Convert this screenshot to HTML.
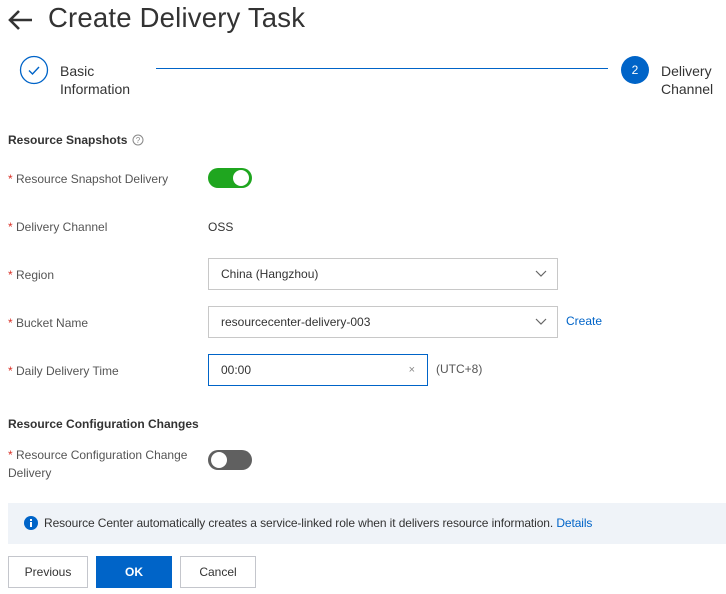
<!DOCTYPE html>
<html><head><style>
*{box-sizing:border-box;margin:0;padding:0}
body{width:726px;height:594px;background:#fff;font-family:"Liberation Sans",sans-serif;position:relative;overflow:hidden;color:#333}
.a{position:absolute;white-space:nowrap}
.lbl{font-size:12px;color:#555}
.lbl b{color:#d93026;font-weight:normal}
.box{position:absolute;border:1px solid #c8c8c8;background:#fff;font-size:12px;color:#333;padding-left:12px;line-height:30px;height:32px}
.chev{position:absolute;right:10px;top:10px}
.btn{position:absolute;top:556px;height:32px;border:1px solid #c4c6cc;background:#fff;font-size:12px;text-align:center;line-height:30px;color:#333}
</style></head><body>
<svg class="a" style="left:8px;top:9px" width="26" height="22" viewBox="0 0 26 22"><path d="M24 11H3M11 2L2 11l9 9" stroke="#333" stroke-width="2.6" fill="none"/></svg>
<div class="a" style="left:48px;top:2px;font-size:27.5px;color:#333;letter-spacing:0.2px">Create Delivery Task</div>

<svg class="a" style="left:19px;top:55px" width="30" height="30"><circle cx="15" cy="15" r="13.5" stroke="#0064c8" stroke-width="1.3" fill="#fff"/><path d="M10 15.5l3.5 3.5 6.5-7" stroke="#0064c8" stroke-width="1.4" fill="none"/></svg>
<div class="a" style="left:60px;top:62px;font-size:14px;line-height:18px;color:#333">Basic<br>Information</div>
<div class="a" style="left:156px;top:68px;width:452px;height:1px;background:#0064c8"></div>
<div class="a" style="left:621px;top:56px;width:28px;height:28px;border-radius:50%;background:#0064c8;color:#fff;font-size:12px;text-align:center;line-height:28px">2</div>
<div class="a" style="left:661px;top:62px;font-size:14px;line-height:18px;color:#333">Delivery<br>Channel</div>

<div class="a" style="left:8px;top:133px;font-size:12px;font-weight:bold;color:#333">Resource Snapshots</div>
<svg class="a" style="left:132px;top:134px" width="12" height="12"><circle cx="6" cy="6" r="5" stroke="#888" fill="none"/><text x="6" y="9" font-size="8" text-anchor="middle" fill="#888" font-family="Liberation Sans">?</text></svg>

<div class="a lbl" style="left:8px;top:172px"><b>*</b> Resource Snapshot Delivery</div>
<div class="a" style="left:208px;top:168px;width:44px;height:20px;border-radius:10px;background:#1fa61f"><div style="position:absolute;right:3px;top:2px;width:16px;height:16px;border-radius:50%;background:#fff"></div></div>

<div class="a lbl" style="left:8px;top:220px"><b>*</b> Delivery Channel</div>
<div class="a" style="left:208px;top:220px;font-size:12px;color:#333">OSS</div>

<div class="a lbl" style="left:8px;top:268px"><b>*</b> Region</div>
<div class="box" style="left:208px;top:258px;width:350px">China (Hangzhou)<svg class="chev" width="12" height="10"><path d="M1 2l5 5 5-5" stroke="#666" stroke-width="1.2" fill="none"/></svg></div>

<div class="a lbl" style="left:8px;top:316px"><b>*</b> Bucket Name</div>
<div class="box" style="left:208px;top:306px;width:350px">resourcecenter-delivery-003<svg class="chev" width="12" height="10"><path d="M1 2l5 5 5-5" stroke="#666" stroke-width="1.2" fill="none"/></svg></div>
<div class="a" style="left:566px;top:314px;font-size:12px;color:#0064c8">Create</div>

<div class="a lbl" style="left:8px;top:364px"><b>*</b> Daily Delivery Time</div>
<div class="box" style="left:208px;top:354px;width:220px;border-color:#0064c8">00:00<span style="position:absolute;right:12px;top:0;color:#888;font-size:11px">×</span></div>
<div class="a" style="left:436px;top:362px;font-size:12px;color:#555">(UTC+8)</div>

<div class="a" style="left:8px;top:417px;font-size:12px;font-weight:bold;color:#333">Resource Configuration Changes</div>
<div class="a lbl" style="left:8px;top:446px;line-height:18px"><b>*</b> Resource Configuration Change<br>Delivery</div>
<div class="a" style="left:208px;top:450px;width:44px;height:20px;border-radius:10px;background:#606060"><div style="position:absolute;left:3px;top:2px;width:16px;height:16px;border-radius:50%;background:#fff"></div></div>

<div class="a" style="left:8px;top:503px;width:718px;height:41px;background:#eff3f8"></div>
<svg class="a" style="left:24px;top:516px" width="14" height="14"><circle cx="7" cy="7" r="7" fill="#0064c8"/><rect x="6" y="6" width="2" height="5" fill="#fff"/><rect x="6" y="3" width="2" height="2" fill="#fff"/></svg>
<div class="a" style="left:44px;top:516px;font-size:12px;color:#333;letter-spacing:-0.1px">Resource Center automatically creates a service-linked role when it delivers resource information. <span style="color:#0064c8">Details</span></div>

<div class="btn" style="left:8px;width:80px">Previous</div>
<div class="btn" style="left:96px;width:76px;background:#0064c8;border-color:#0064c8;color:#fff;font-weight:bold">OK</div>
<div class="btn" style="left:180px;width:76px">Cancel</div>
</body></html>
